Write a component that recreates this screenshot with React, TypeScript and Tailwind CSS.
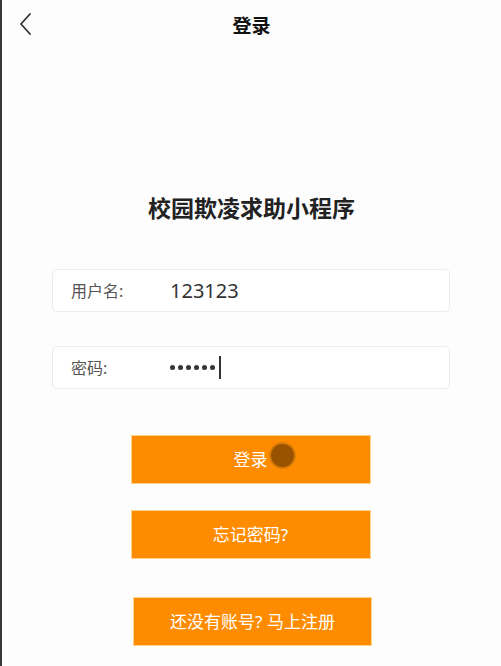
import React from "react";

export default function App() {
  const font = { fontFamily: '"Noto Sans", "Noto Sans CJK SC", sans-serif' };
  return (
    <div
      className="w-[501px] h-[666px] bg-[#fdfdfd] border-l-2 border-[#3a3a3a] overflow-hidden relative"
      style={font}
    >
      {/* header */}
      <div className="h-[52px] flex items-center relative">
        <svg
          className="absolute left-[15px] top-[12px]"
          width="18"
          height="24"
          viewBox="0 0 18 24"
          fill="none"
        >
          <path d="M13 2 L4 12 L13 22" stroke="#333" strokeWidth="1.8" strokeLinecap="round" strokeLinejoin="round" />
        </svg>
        <div className="w-full text-center text-[19px] font-bold text-[#111] leading-[24px]">
          登录
        </div>
      </div>

      {/* title */}
      <div className="mt-[141px] text-center text-[23px] font-bold text-[#222] leading-[30px]">
        校园欺凌求助小程序
      </div>

      {/* inputs */}
      <div className="mt-[46px] pl-[50px] pr-[51px] flex flex-col gap-[34px]">
        <div className="h-[43px] rounded-[5px] border border-[#ececec] bg-white flex items-center">
          <span className="w-[117px] pl-[18px] text-[16px] text-[#555]">用户名:</span>
          <span className="text-[20px] text-[#333]">123123</span>
        </div>
        <div className="h-[43px] rounded-[5px] border border-[#ececec] bg-white flex items-center">
          <span className="w-[117px] pl-[18px] text-[16px] text-[#555]">密码:</span>
          <span className="flex items-center gap-[3px]" aria-label="••••••">
            <span className="w-[5px] h-[5px] rounded-full bg-[#333]" />
            <span className="w-[5px] h-[5px] rounded-full bg-[#333]" />
            <span className="w-[5px] h-[5px] rounded-full bg-[#333]" />
            <span className="w-[5px] h-[5px] rounded-full bg-[#333]" />
            <span className="w-[5px] h-[5px] rounded-full bg-[#333]" />
            <span className="w-[5px] h-[5px] rounded-full bg-[#333]" />
            <span className="inline-block w-[1.5px] h-[23px] bg-[#333] ml-[1px]" />
          </span>
        </div>
      </div>

      {/* buttons */}
      <div className="mt-[46px] flex flex-col items-center -ml-[2px]">
        <div className="relative w-[240px] h-[49px] bg-[#ff8c00] flex items-center justify-center text-white text-[17px] border border-[#ffd28a]">
          登录
          <span className="absolute left-[139px] top-[8px] w-[23px] h-[23px] rounded-full bg-[#985200] ring-2 ring-[#c0700a]/60" />
        </div>
        <div className="mt-[26px] w-[240px] h-[49px] bg-[#ff8c00] flex items-center justify-center text-white text-[17px] border border-[#ffd28a]">
          忘记密码?
        </div>
        <div className="mt-[38px] ml-[4px] w-[239px] h-[49px] bg-[#ff8c00] flex items-center justify-center text-white text-[17px] border border-[#ffd28a]">
          还没有账号? 马上注册
        </div>
      </div>
    </div>
  );
}
